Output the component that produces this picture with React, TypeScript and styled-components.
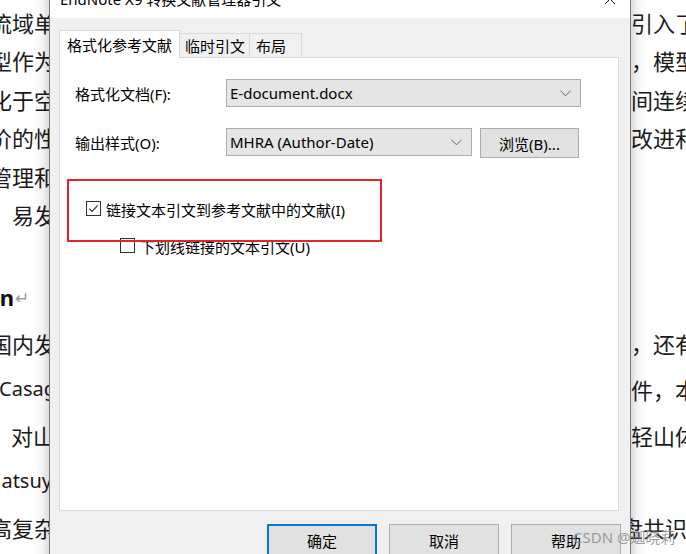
import React from 'react';
import styled, { createGlobalStyle } from 'styled-components';

const GlobalStyle = createGlobalStyle`
  html, body {
    margin: 0;
    padding: 0;
    background: #fff;
  }
  body {
    width: 686px;
    height: 554px;
    overflow: hidden;
  }
`;

const Screen = styled.div`
  position: relative;
  width: 686px;
  height: 554px;
  overflow: hidden;
  background: #fff;
  font-family: "Noto Sans", "Noto Sans CJK SC", sans-serif;
`;

/* background word document */
const Document = styled.div`
  padding-top: 3px;
  font-family: "Noto Sans CJK SC", "Noto Sans", sans-serif;
  font-size: 22px;
  color: #1b1b1b;
`;

const DocLine = styled.div<{ $h: number; $gap?: number }>`
  display: grid;
  grid-template-columns: 56px 575px 55px;
  height: ${(p) => p.$h}px;
  line-height: ${(p) => p.$h}px;
  margin-top: ${(p) => p.$gap ?? 0}px;
`;

const LeftPart = styled.div<{ $end?: number; $latin?: boolean }>`
  display: flex;
  justify-content: flex-end;
  overflow: hidden;
  white-space: nowrap;
  padding-right: ${(p) => p.$end ?? 0}px;
  ${(p) => p.$latin && 'font-family: "Noto Sans", sans-serif; font-size: 20px;'}
`;

const RightPart = styled.div<{ $shift?: number }>`
  grid-column: 3;
  overflow: hidden;
  white-space: nowrap;
  & > span {
    display: inline-block;
    margin-left: ${(p) => p.$shift ?? 0}px;
  }
`;

const HeadingEnd = styled.span`
  font-family: "Noto Sans", sans-serif;
  font-weight: 700;
  color: #111;
`;

const ParaMark = styled.span`
  font-size: 17px;
  color: #9a9a9a;
  margin-left: 1px;
`;

/* dialog window */
const Dialog = styled.div`
  position: absolute;
  left: 49px;
  top: -16px;
  width: 582px;
  height: 600px;
  box-sizing: border-box;
  border: 1px solid #7a7a7a;
  background: #f0f0f0;
  box-shadow: 0 0 14px rgba(0, 0, 0, 0.28);
  display: flex;
  flex-direction: column;
  font-size: 15px;
  color: #000;
`;

const TitleBar = styled.div`
  height: 33px;
  background: #fff;
  display: flex;
  justify-content: space-between;
  align-items: flex-start;
`;

const Title = styled.div`
  padding: 4px 0 0 10px;
  line-height: 20px;
`;

const CloseButton = styled.div`
  width: 40px;
  height: 28px;
  display: flex;
  align-items: center;
  justify-content: center;
`;

const Body = styled.div`
  padding: 12px 11px 0 9px;
`;

const TabRow = styled.div`
  display: flex;
  align-items: flex-end;
  height: 28px;
  margin-bottom: -1px;
  position: relative;
  z-index: 1;
`;

const Tab = styled.div<{ $active?: boolean; $w: number; $pad: number }>`
  box-sizing: border-box;
  width: ${(p) => p.$w}px;
  height: ${(p) => (p.$active ? 28 : 24)}px;
  margin-bottom: ${(p) => (p.$active ? 0 : 1)}px;
  padding-left: ${(p) => p.$pad}px;
  border: 1px solid #d9d9d9;
  border-bottom: none;
  background: ${(p) => (p.$active ? '#fff' : '#f0f0f0')};
  display: flex;
  align-items: center;
  white-space: nowrap;
  & + & {
    margin-left: -1px;
  }
`;

const Panel = styled.div`
  box-sizing: border-box;
  height: 454px;
  border: 1px solid #d9d9d9;
  background: #fff;
  padding: 21px 0 0 15px;
`;

const FormGrid = styled.div`
  display: grid;
  grid-template-columns: 151px auto;
  row-gap: 21px;
  align-items: start;
`;

const Label = styled.div`
  height: 28px;
  display: flex;
  align-items: center;
`;

const FieldRow = styled.div`
  display: flex;
  gap: 8px;
  align-items: flex-start;
`;

const Combo = styled.div<{ $w: number }>`
  box-sizing: border-box;
  width: ${(p) => p.$w}px;
  height: 28px;
  border: 1px solid #adadad;
  background: #e5e5e5;
  padding: 0 9px 0 3px;
  display: flex;
  align-items: center;
  justify-content: space-between;
  white-space: nowrap;
`;

const Button = styled.div<{ $w: number; $h: number; $primary?: boolean }>`
  box-sizing: border-box;
  width: ${(p) => p.$w}px;
  height: ${(p) => p.$h}px;
  border: ${(p) => (p.$primary ? '2px solid #0078d7' : '1px solid #adadad')};
  background: #e1e1e1;
  display: flex;
  align-items: center;
  justify-content: center;
  white-space: nowrap;
`;

const CheckList = styled.div`
  margin-top: 41px;
  padding-left: 11px;
  display: flex;
  flex-direction: column;
  gap: 17px;
`;

const CheckRow = styled.div<{ $indent?: number }>`
  height: 20px;
  display: flex;
  align-items: center;
  gap: 5px;
  padding-left: ${(p) => p.$indent ?? 0}px;
  white-space: nowrap;
`;

const Box = styled.div`
  box-sizing: border-box;
  width: 15px;
  height: 15px;
  border: 1px solid #333;
  background: #fff;
  display: flex;
  align-items: center;
  justify-content: center;
  margin-top: -1px;
`;

const ButtonRow = styled.div`
  display: flex;
  justify-content: flex-end;
  gap: 12px;
  padding: 13px 9px 0 0;
`;

/* annotation overlays */
const RedFrame = styled.div`
  position: absolute;
  left: 67px;
  top: 179px;
  width: 315px;
  height: 63px;
  box-sizing: border-box;
  border: 2px solid #e5232b;
`;

const Watermark = styled.div`
  position: absolute;
  left: 573px;
  top: 527px;
  font-size: 15px;
  line-height: 20px;
  color: rgba(140, 140, 140, 0.85);
  white-space: nowrap;
`;

const Chevron = () => (
  <svg width="11" height="7" viewBox="0 0 11 7">
    <polyline points="0.5,0.8 5.5,5.8 10.5,0.8" fill="none" stroke="#666" strokeWidth="1" />
  </svg>
);

const Check = () => (
  <svg width="13" height="13" viewBox="0 0 13 13">
    <path d="M2.2 6.6 L5 9.4 L10.8 3.4" fill="none" stroke="#333" strokeWidth="1.2" />
  </svg>
);

const topLines = [
  { l: '流域单', r: '引入了' },
  { l: '型作为', r: '，模型' },
  { l: '化于空', r: '间连续' },
  { l: '价的性', r: '改进和' },
  { l: '管理和', r: '' },
  { l: '易发', r: '' },
];

const lowerLines = [
  { l: '国内发', r: '，还有' },
  { l: 'Casag', r: '件，本', latin: true, end: -2 },
  { l: '，对山', r: '轻山体', end: 1 },
  { l: 'atsuy', r: '', latin: true, end: 4 },
  { l: '高复杂', r: '盘共识', shift: -10 },
];

const App: React.FC = () => {
  return (
    <Screen>
      <GlobalStyle />
      <Document>
        {topLines.map((line, i) => (
          <DocLine key={i} $h={38.4}>
            <LeftPart>{line.l}</LeftPart>
            <RightPart>
              <span>{line.r}</span>
            </RightPart>
          </DocLine>
        ))}
        <DocLine $h={46} $gap={41}>
          <LeftPart $end={27}>
            <HeadingEnd>n</HeadingEnd>
            <ParaMark>↵</ParaMark>
          </LeftPart>
        </DocLine>
        {lowerLines.map((line, i) => (
          <DocLine key={i} $h={46}>
            <LeftPart $latin={line.latin} $end={line.end}>
              {line.l}
            </LeftPart>
            <RightPart $shift={line.shift}>
              <span>{line.r}</span>
            </RightPart>
          </DocLine>
        ))}
      </Document>

      <Dialog>
        <TitleBar>
          <Title>EndNote X9 转换文献管理器引文</Title>
          <CloseButton>
            <svg width="10" height="10" viewBox="0 0 10 10">
              <path d="M0 0 L10 10 M10 0 L0 10" stroke="#111" strokeWidth="1" />
            </svg>
          </CloseButton>
        </TitleBar>
        <Body>
          <TabRow>
            <Tab $active $w={121} $pad={7}>
              格式化参考文献
            </Tab>
            <Tab $w={71} $pad={5}>
              临时引文
            </Tab>
            <Tab $w={53} $pad={6}>
              布局
            </Tab>
          </TabRow>
          <Panel>
            <FormGrid>
              <Label>格式化文档(F):</Label>
              <Combo $w={355}>
                <span>E-document.docx</span>
                <Chevron />
              </Combo>
              <Label>输出样式(O):</Label>
              <FieldRow>
                <Combo $w={246}>
                  <span>MHRA (Author-Date)</span>
                  <Chevron />
                </Combo>
                <Button $w={99} $h={30}>
                  浏览(B)...
                </Button>
              </FieldRow>
            </FormGrid>
            <CheckList>
              <CheckRow>
                <Box>
                  <Check />
                </Box>
                <span>链接文本引文到参考文献中的文献(I)</span>
              </CheckRow>
              <CheckRow $indent={34}>
                <Box />
                <span>下划线链接的文本引文(U)</span>
              </CheckRow>
            </CheckList>
          </Panel>
        </Body>
        <ButtonRow>
          <Button $w={110} $h={32} $primary>
            确定
          </Button>
          <Button $w={110} $h={32}>
            取消
          </Button>
          <Button $w={110} $h={32}>
            帮助
          </Button>
        </ButtonRow>
      </Dialog>

      <RedFrame />
      <Watermark>CSDN @迦晓莉</Watermark>
    </Screen>
  );
};

export default App;
